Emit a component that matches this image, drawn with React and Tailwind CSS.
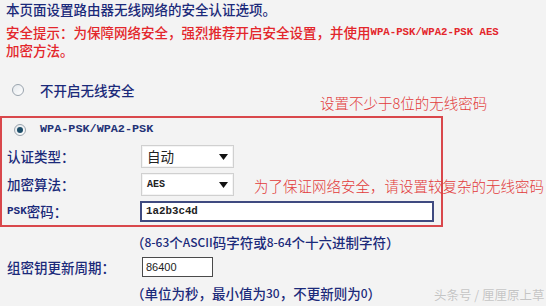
import React from 'react';

const CJK = { fontFamily: '"Noto Sans CJK SC", "Noto Sans", sans-serif' };

const Radio = ({ checked }) => (
  <div className="w-[12px] h-[12px] rounded-full border border-[#9aa4ae] bg-gradient-to-br from-[#e4e8ec] to-[#ffffff] flex items-center justify-center">
    {checked && <div className="w-[6px] h-[6px] rounded-full bg-[#1d4d68]" />}
  </div>
);

const Arrow = () => (
  <svg width="9" height="6" viewBox="0 0 9 6" className="block">
    <path d="M0 0 L9 0 L4.5 6 Z" fill="#111" />
  </svg>
);

const Select = ({ children }) => (
  <div className="w-[93px] h-[23px] bg-white border border-[#d0d0d0] flex items-center justify-between pl-[5px] pr-[5px] shadow-[inset_0_0_0_1px_#f4f4f4]">
    {children}
    <Arrow />
  </div>
);

export default function App() {
  return (
    <div
      className="relative w-[546px] h-[306px] overflow-hidden bg-[#f3f3f3] text-[#1b2a7a] text-[13.5px] font-medium pt-[1px]"
      style={CJK}
    >
      {/* intro */}
      <div className="pl-[6px]">
        <div className="h-[16px] leading-[16px]">本页面设置路由器无线网络的安全认证选项。</div>
        <div className="mt-[6px] h-[18px] leading-[16px] text-[#e3262b] flex items-center">
          <span>安全提示：为保障网络安全，强烈推荐开启安全设置，并使用</span>
          <span className="font-['Liberation_Mono',monospace] font-bold text-[10.7px]">WPA-PSK/WPA2-PSK AES</span>
        </div>
        <div className="h-[18px] leading-[16px] flex items-center text-[#e3262b]">加密方法。</div>
      </div>

      {/* no security */}
      <div className="mt-[22px] h-[18px] flex items-center pl-[12px] gap-[16px]">
        <Radio />
        <span>不开启无线安全</span>
      </div>

      {/* wpa box */}
      <div className="mt-[17px] w-[443px] border-2 border-[#d9474b] pt-[2px] pb-[3px] pl-[5px]">
        <div className="h-[20px] flex items-center pl-[7px] gap-[14px]">
          <Radio checked />
          <span className="font-['Liberation_Mono',monospace] font-bold text-[11.8px] text-[#233276]">WPA-PSK/WPA2-PSK</span>
        </div>
        <div className="mt-[5px] h-[23px] flex items-center">
          <span className="w-[134px]">认证类型：</span>
          <Select>
            <span className="text-[#222] font-normal">自动</span>
          </Select>
        </div>
        <div className="mt-[5px] h-[23px] flex items-center">
          <span className="w-[134px]">加密算法：</span>
          <Select>
            <span className="font-['Liberation_Mono',monospace] font-bold text-[10px] text-[#222]">AES</span>
          </Select>
        </div>
        <div className="mt-[5px] h-[21px] flex items-center">
          <span className="w-[133px] flex items-center">
            <span className="font-['Liberation_Mono',monospace] font-bold text-[11px]">PSK</span>
            <span>密码：</span>
          </span>
          <div className="w-[294px] h-[21px] bg-white border-2 border-[#3f4a80] flex items-center pl-[4px]">
            <span className="font-['Liberation_Mono',monospace] font-bold text-[10.8px] text-[#222]">1a2b3c4d</span>
          </div>
        </div>
      </div>

      {/* below box */}
      <div className="pl-[7px]">
        <div className="mt-[6px] h-[18px] flex items-center pl-[124px]">
          （<span className="text-[12px]">8-63</span>个<span className="text-[12px]">ASCII</span>码字符或<span className="text-[12px]">8-64</span>个十六进制字符）
        </div>
        <div className="mt-[6px] h-[20px] flex items-center">
          <span className="w-[135px]">组密钥更新周期：</span>
          <div className="w-[71px] h-[20px] bg-white border border-[#4a4a4a] flex items-center pl-[3px]">
            <span className="font-['Liberation_Sans',sans-serif] font-normal text-[11px] text-[#222]">86400</span>
          </div>
        </div>
        <div className="mt-[7px] h-[18px] flex items-center pl-[124px]">
          （单位为秒，最小值为<span className="text-[12px]">30</span>，不更新则为<span className="text-[12px]">0</span>）
        </div>
      </div>

      {/* annotations */}
      <div className="absolute left-[320px] top-[94px] text-[14.5px] leading-[18px] text-[#e23a3a] font-light">
        设置不少于8位的无线密码
      </div>
      <div className="absolute left-[254px] top-[177px] text-[14.5px] leading-[18px] text-[#e23a3a] font-light">
        为了保证网络安全，请设置较复杂的无线密码
      </div>
      <div className="absolute left-[434px] top-[287px] text-[12.5px] leading-[16px] text-[#c4c4c4] font-normal [text-shadow:0_0_1px_#fff]">
        头条号 / 厘厘原上草
      </div>
    </div>
  );
}
